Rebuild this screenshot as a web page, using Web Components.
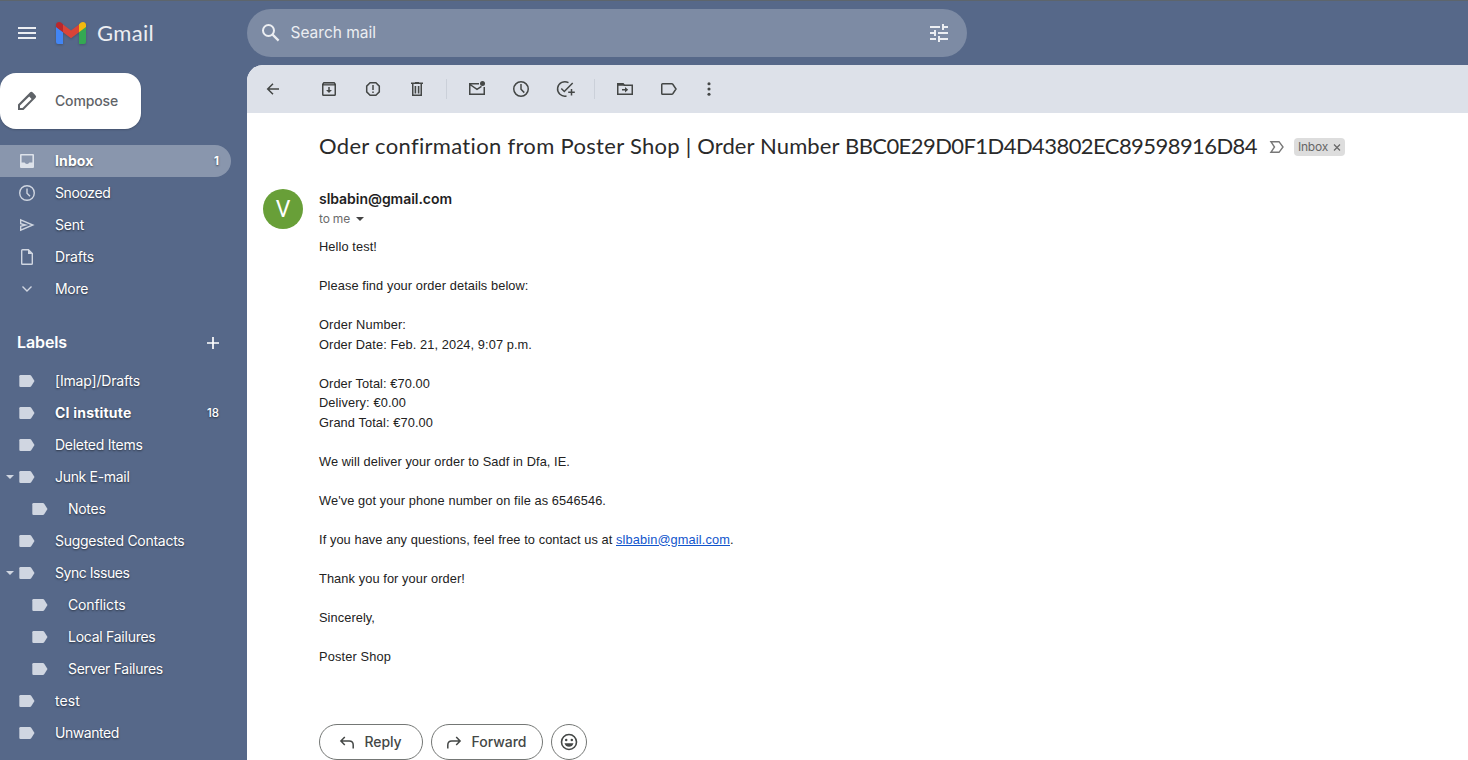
<!DOCTYPE html>
<html lang="en"><head><meta charset="utf-8"><title>Gmail</title>
<style>
html,body{margin:0;height:100%;overflow:hidden}
body{font-family:Inter,"Liberation Sans",sans-serif;font-size:14px;background:#566889}
</style></head><body>
<mail-app></mail-app>
<script>
const ICONS={
menu:[18,14,'<path d="M0 1h18v2H0zM0 6h18v2H0zM0 11h18v2H0z" fill="currentColor"/>'],
search:[18,18,'<circle cx="6.5" cy="6.5" r="5.5" fill="none" stroke="currentColor" stroke-width="2"/><path d="M10.6 10.6l6 6" stroke="currentColor" stroke-width="2.2"/>'],
tune:[18,18,'<path d="M0 2h10v2H0zM12 0h2v2h4v2h-4v2h-2zM0 8h4V6h2v6H4v-2H0zM8 8h10v2H8zM0 14h6v2H0zM8 12h2v2h8v2h-8v2H8z" fill="currentColor"/>'],
pencil:[18,18,'<path fill="currentColor" fill-rule="evenodd" d="M17.4 3.2 14.8.6a2 2 0 0 0-2.9 0L0 12.5V18h5.5L17.4 6.1a2 2 0 0 0 0-2.9ZM4.5 16.1H2v-2.5l9.2-9.2 2.4 2.5Z"/>'],
gmail:[30,22,'<path fill="#4285f4" d="M0 4.8l7 5V22H2a2 2 0 0 1-2-2z"/><path fill="#34a853" d="M23 9.8l7-5V20a2 2 0 0 1-2 2h-5z"/><path fill="#db4437" d="M7 2.4l8 6 8-6v7.8l-8 6-8-6z"/><path fill="#b8282c" d="M0 5V3c0-2.7 3-4 5-2.4l2 1.6v8L0 5z"/><path fill="#f2b90e" d="M30 5V3c0-2.7-3-4-5-2.4l-2 1.6v8l7-5.2z"/>'],
inbox:[16,16,'<path fill="currentColor" fill-rule="evenodd" d="M2 1h12a1 1 0 0 1 1 1v12a1 1 0 0 1-1 1H2a1 1 0 0 1-1-1V2a1 1 0 0 1 1-1Zm.6 1.6v7H5.5c.6 0 .6 1.4 2.5 1.4s1.900-1.400 2.500-1.400h2.900v-7Z"/>'],
snooze:[16,16,'<circle cx="8" cy="8" r="7.300" fill="none" stroke="currentColor" stroke-width="1.400"/><path d="M8 3.500v4.800l3 3" fill="none" stroke="currentColor" stroke-width="1.400"/>'],
sent:[16,16,'<path d="M1.700 2.900 13.800 8 1.700 13.100V9.300L6.500 8 1.700 6.700z" fill="none" stroke="currentColor" stroke-width="1.400"/>'],
draft:[16,16,'<path d="M2.700 1.500q0-.8.800-.8h5.900l3.900 3.900v9.900q0 .8-.8.800h-9q-.8 0-.8-.8z" fill="none" stroke="currentColor" stroke-width="1.400"/><path d="M9 0v5h5z" fill="currentColor"/>'],
more:[16,16,'<path d="M3.500 5.500 8 10l4.500-4.500" fill="none" stroke="currentColor" stroke-width="1.400"/>'],
tag:[16,16,'<path d="M1.500 2h9.400q.8 0 1.300.7L15.500 8l-3.300 5.300q-.5.700-1.300.7H1.500Q.300 14 .300 12.800V3.200Q.300 2 1.500 2z" fill="currentColor"/>'],
plus:[12,12,'<path d="M5.150 0h1.700v5.150H12v1.700H6.850V12h-1.700V6.850H0v-1.700h5.150z" fill="currentColor"/>'],
tri:[8,4,'<path d="M0 0h8L4 4z" fill="currentColor"/>'],
back:[20,20,'<path d="M16 10H5M10 4.700 4.700 10l5.300 5.300" fill="none" stroke="currentColor" stroke-width="1.500"/>'],
archive:[20,20,'<path fill="currentColor" fill-rule="evenodd" d="M4.500 3h11L17 4.900V15.500q0 1.500-1.500 1.500h-11Q3 17 3 15.500V4.900zM4.500 6.500v9h11v-9z"/><path d="M5 4.500h10v.8H5z" fill="#aeb2b7"/><path d="M9.250 8h1.500v3h2.200L10 14 7.050 11h2.200z" fill="currentColor"/>'],
spam:[20,20,'<path d="M7.100 3.700h5.800l3.400 3.400v5.800l-3.400 3.400H7.100l-3.400-3.400V7.100z" fill="none" stroke="currentColor" stroke-width="1.500"/><path d="M9.250 6h1.500v5h-1.500zM9.250 12.500h1.500V14h-1.500z" fill="currentColor"/>'],
trash:[20,20,'<path d="M5.750 5v11.250h8.500V5M4 4.250h12" fill="none" stroke="currentColor" stroke-width="1.500"/><path d="M8 3h4v1.500H8zM7.600 7h1.600v7.500H7.600zM10.800 7h1.600v7.500h-1.600z" fill="currentColor"/>'],
unread:[20,20,'<path d="M12 4.750H2.750v10.500h14.500V8M3 5.500l7 4.800 4.500-2.900" fill="none" stroke="currentColor" stroke-width="1.500"/><circle cx="15.500" cy="4.400" r="2.500" fill="currentColor"/>'],
clock:[20,20,'<circle cx="10" cy="10" r="7.250" fill="none" stroke="currentColor" stroke-width="1.500"/><path d="M10 5v5.300l3.300 3.300" fill="none" stroke="currentColor" stroke-width="1.500"/>'],
task:[20,20,'<path d="M13.500 3.700A7.250 7.250 0 1 0 11.500 17M6.300 9.500l3 3L17.700 4" fill="none" stroke="currentColor" stroke-width="1.500"/><path d="M16.500 10v6.500M13.200 13.250h6.600" stroke="currentColor" stroke-width="1.500"/>'],
move:[20,20,'<path d="M2.750 4.750H8l1.500 1.500h7.750v9H2.750z" fill="none" stroke="currentColor" stroke-width="1.500"/><path d="M2 4h6l2 2.700H2zM7 9.900h3V8l3.200 2.700L10 13.400v-2H7z" fill="currentColor"/>'],
label:[20,20,'<path d="M3.600 4.750h9.200q.6 0 1 .5L17 10l-3.200 4.750q-.4.500-1 .5H3.600q-.85 0-.85-.85V5.600q0-.85.85-.85z" fill="none" stroke="currentColor" stroke-width="1.500"/>'],
dots:[20,20,'<g fill="currentColor"><circle cx="10" cy="4.700" r="1.550"/><circle cx="10" cy="10" r="1.550"/><circle cx="10" cy="15.300" r="1.550"/></g>'],
important:[16,14,'<path d="M1.900 1.700H10L14 7l-4 5.300H1.900L5.500 7z" fill="none" stroke="currentColor" stroke-width="1.400"/>'],
reply:[16,14,'<path d="M5.800 2 1.900 6l3.900 4M2 6h8.200q4 0 4 4v3.500" fill="none" stroke="currentColor" stroke-width="1.500"/>'],
forward:[16,14,'<path d="M10.200 2 14.100 6l-3.900 4M14 6H5.800q-4 0-4 4v3.500" fill="none" stroke="currentColor" stroke-width="1.500"/>'],
smile:[18,18,'<circle cx="9" cy="9" r="7.500" fill="none" stroke="currentColor" stroke-width="1.600"/><g fill="currentColor"><circle cx="6.200" cy="7" r="1.250"/><circle cx="11.800" cy="7" r="1.250"/><path d="M4.500 10.300h9Q12.400 13.800 9 13.800T4.500 10.300z"/></g>'],
cross:[8,8,'<path d="M1 1.500l6 6M7 1.500 1 7.500" stroke="currentColor" stroke-width="1.200"/>']
};
function define(name,html,after){
  const t=document.createElement('template');t.innerHTML=html;
  customElements.define(name,class extends HTMLElement{
    connectedCallback(){
      if(this.shadowRoot)return;
      this.attachShadow({mode:'open'}).append(t.content.cloneNode(true));
      if(after)after(this,this.shadowRoot);
    }
  });
}
define('ui-icon','<style>:host{display:inline-flex;flex:none}svg{display:block;overflow:visible}</style><span></span>',(el,r)=>{
  const [w,h,b]=ICONS[el.getAttribute('name')];
  r.querySelector('span').innerHTML=`<svg width="${w}" height="${h}" viewBox="0 0 ${w} ${h}">${b}</svg>`;
});
/* Tracks its text so that the line takes the width given in "w". */
define('fit-text','<style>:host{display:inline-block;white-space:pre;flex:none}span{display:inline-block}:host(.link) span{text-decoration:underline}</style><span></span>',(el,r)=>{
  const s=r.querySelector('span'),w=+el.getAttribute('w');
  s.textContent=el.getAttribute('text');
  if(!w)return;
  s.style.letterSpacing=((w-s.getBoundingClientRect().width)/s.textContent.length)+'px';
});
define('top-bar',`<style>
:host{display:flex;align-items:center;height:65px;box-sizing:border-box;border-top:1px solid #5d656c;color:#eceef2}
.brand{display:flex;align-items:center;width:229px;padding-left:18px;flex:none}
.brand ui-icon+ui-icon{margin-left:20px;filter:drop-shadow(0 1px 1px #0003)}
.name{font:22px Lato,sans-serif;margin-left:11px;padding-bottom:2px}
.search{display:flex;align-items:center;width:720px;height:48px;border-radius:24px;background:#7d8ba4;box-sizing:border-box;padding:0 19px 0 15px}
.search fit-text{font-size:15.500px;margin-left:10.500px;flex:1;padding-bottom:2px}
</style><div class="brand"><ui-icon name="menu"></ui-icon><ui-icon name="gmail"></ui-icon><fit-text class="name" text="Gmail" w="57"></fit-text></div>
<div class="search"><ui-icon name="search"></ui-icon><fit-text text="Search mail" w="85.5"></fit-text><ui-icon name="tune"></ui-icon></div>`);
define('nav-item',`<style>
:host{display:flex;align-items:center;height:32px;box-sizing:border-box;width:231px;padding-left:19px;position:relative;color:#fff;text-shadow:0 1px 2px #0008;border-radius:0 16px 16px 0}
:host([child]){padding-left:32px}
:host([active]){background:#8996ad}
:host([bold]){font-weight:700}
.i{color:#d0d6e1}:host([active]) .i{color:#dde2ea}
.t{margin-left:20px;font-size:14px;padding-bottom:2px}
.n{margin-left:auto;margin-right:12px;font-size:11.500px}
:host(:not([active])) .n{font-weight:500}
.a{position:absolute;left:6px;top:14px;color:#d0d6e1}
</style>`,(el,r)=>{
  const g=k=>el.getAttribute(k);
  r.innerHTML+=`${el.hasAttribute('open')?'<ui-icon class="a" name="tri"></ui-icon>':''}<ui-icon class="i" name="${g('icon')||'tag'}"></ui-icon><fit-text class="t" text="${g('text')}" w="${g('w')}"></fit-text>${g('count')?`<span class="n">${g('count')}</span>`:''}`;
});
define('side-nav',`<style>
:host{display:block;width:247px;flex:none}
.compose{display:flex;align-items:center;width:141px;height:56px;margin:8px 0 16px;border-radius:16px;background:#fff;color:#5f6368;box-sizing:border-box;padding-left:18px;box-shadow:0 1px 2px #0003;font-weight:500}
.compose fit-text{margin-left:19px;padding-bottom:2px}
.head{display:flex;align-items:center;justify-content:space-between;color:#fff;height:44px;padding:0 28px 0 17px;margin:15px 0 1px;font-size:16px;font-weight:600}
.head ui-icon{padding-top:2px}
</style><div class="compose"><ui-icon name="pencil"></ui-icon><fit-text text="Compose" w="63"></fit-text></div>
<nav-item active bold icon="inbox" text="Inbox" w="38.5" count="1"></nav-item>
<nav-item icon="snooze" text="Snoozed" w="55.5"></nav-item>
<nav-item icon="sent" text="Sent" w="29"></nav-item>
<nav-item icon="draft" text="Drafts" w="39"></nav-item>
<nav-item icon="more" text="More" w="33"></nav-item>
<div class="head"><fit-text text="Labels" w="50"></fit-text><ui-icon name="plus"></ui-icon></div>
<nav-item text="[Imap]/Drafts" w="85"></nav-item>
<nav-item bold text="CI institute" w="76.5"></nav-item>
<nav-item text="Deleted Items" w="87.5"></nav-item>
<nav-item open text="Junk E-mail" w="74.5"></nav-item>
<nav-item child text="Notes" w="37.5"></nav-item>
<nav-item text="Suggested Contacts" w="129.5"></nav-item>
<nav-item open text="Sync Issues" w="74.5"></nav-item>
<nav-item child text="Conflicts" w="57.5"></nav-item>
<nav-item child text="Local Failures" w="87.5"></nav-item>
<nav-item child text="Server Failures" w="95"></nav-item>
<nav-item text="test" w="25"></nav-item>
<nav-item text="Unwanted" w="64"></nav-item>`.replace('w="76.5"','w="76.5" count="18"'));
define('tool-bar',`<style>
:host{display:flex;align-items:center;height:48px;background:#dde1e9;padding-left:4px;color:#444746}
ui-icon{width:44px;justify-content:center}
.first{margin-right:12px}.last{width:36px}
i{width:1px;height:20px;background:#cbd0d9;margin:0 8px 0 7px}
</style><ui-icon class="first" name="back"></ui-icon><ui-icon name="archive"></ui-icon><ui-icon name="spam"></ui-icon><ui-icon name="trash"></ui-icon><i></i><ui-icon name="unread"></ui-icon><ui-icon name="clock"></ui-icon><ui-icon name="task"></ui-icon><i></i><ui-icon name="move"></ui-icon><ui-icon name="label"></ui-icon><ui-icon class="last" name="dots"></ui-icon>`);
define('pill-button',`<style>:host{display:flex;align-items:center;height:36px;box-sizing:border-box;border:1px solid #747775;border-radius:18px;color:#444746;padding-left:19px;font-size:14px;font-weight:500}
:host([round]){width:36px;padding:0;justify-content:center}</style><slot></slot>`);
define('mail-message',`<style>
:host{display:block;padding-left:16px;color:#222}
.title{display:flex;align-items:center;height:36px;padding:15px 0 0 56px}
.title>fit-text{font:22px Lato,sans-serif;color:#2a2a2a;padding-bottom:2px}
.title>ui-icon{margin:1px 9px 0 12px;color:#777}
.chip{display:flex;align-items:center;width:51px;height:18px;margin-top:1px;background:#ddd;border-radius:4px;color:#666;font-size:12px;box-sizing:border-box;padding-left:4px}
.chip ui-icon{margin-left:5px}
.from{display:flex;margin-top:25px;height:46px}
.avatar{display:flex;align-items:center;justify-content:center;width:40px;height:40px;border-radius:50%;background:#689f38;color:#fff;font:23px Roboto,sans-serif;margin-right:16px}
.mail{font-weight:600;font-size:14px;line-height:20px;color:#1f1f1f;display:block}
.to{display:flex;align-items:center;height:20px;font-size:12px;color:#6b6b6b}
.to fit-text{padding-bottom:1px}
.to ui-icon{margin-left:6px;color:#444}
.body{margin:2px 0 0 56px;font:12.800px/19.500px "Liberation Sans",Arial,sans-serif}
.body div{height:19.500px;display:flex}
.link{color:#15c}
.actions{display:flex;gap:8px;margin:58px 0 0 56px}
.actions fit-text{margin-left:9.500px;padding-bottom:1px}
</style>
<div class="title"><fit-text text="Oder confirmation from Poster Shop" w="361"></fit-text><fit-text text=" | Order Number " w="165"></fit-text><fit-text text="BBC0E29D0F1D4D43802EC89598916D84" w="412"></fit-text><ui-icon name="important"></ui-icon><div class="chip"><fit-text text="Inbox" w="30"></fit-text><ui-icon name="cross"></ui-icon></div></div>
<div class="from"><div class="avatar">V</div><div><fit-text class="mail" text="slbabin@gmail.com" w="133"></fit-text><div class="to"><fit-text text="to me" w="31"></fit-text><ui-icon name="tri"></ui-icon></div></div></div>
<div class="body"></div>
<div class="actions"><pill-button style="width:104px"><ui-icon name="reply"></ui-icon><fit-text text="Reply" w="37"></fit-text></pill-button><pill-button style="width:112px"><ui-icon name="forward" style="margin-left:-5px"></ui-icon><fit-text text="Forward" w="55"></fit-text></pill-button><pill-button round><ui-icon name="smile"></ui-icon></pill-button></div>`,(el,r)=>{
  const L=[['Hello test!',58],0,['Please find your order details below:',209.5],0,['Order Number:',87],['Order Date: Feb. 21, 2024, 9:07 p.m.',213],0,['Order Total: €70.00',111],['Delivery: €0.00',87],['Grand Total: €70.00',114],0,['We will deliver your order to Sadf in Dfa, IE.',251],0,["We've got your phone number on file as 6546546.",287],0,['If you have any questions, feel free to contact us at ',297,1],0,['Thank you for your order!',146],0,['Sincerely,',56],0,['Poster Shop',72]];
  r.querySelector('.body').innerHTML=L.map(l=>'<div>'+(l?`<fit-text text="${l[0]}" w="${l[1]}"></fit-text>`+(l[2]?'<fit-text class="link" text="slbabin@gmail.com" w="114"></fit-text>.':''):'')+'</div>').join('');
});
define('mail-app',`<style>
:host{display:block;width:1468px;height:760px;overflow:hidden}
.row{display:flex;height:695px}
main{flex:1;background:#fff;border-radius:16px 0 0 0;overflow:hidden}
</style><top-bar></top-bar><div class="row"><side-nav></side-nav><main><tool-bar></tool-bar><mail-message></mail-message></main></div>`);
</script></body></html>
